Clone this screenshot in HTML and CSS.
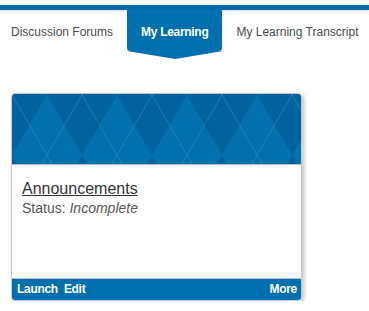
FILE: index.html
```html
<!DOCTYPE html>
<html lang="en">
<head>
    <meta charset="UTF-8">
    <meta name="viewport" content="width=device-width, initial-scale=1.0">
    <title>My Learning</title>
    <link rel="stylesheet" href="styles.css">
</head>
<body>
    <div class="topbar"></div>

    <nav class="tabs">
        <a href="#" class="tab">Discussion Forums</a>
        <a href="#" class="tab tab-active">My Learning</a>
        <a href="#" class="tab">My Learning Transcript</a>
    </nav>

    <div class="course-card">
        <div class="card-banner">
            <svg width="100%" height="70" xmlns="http://www.w3.org/2000/svg">
                <defs>
                    <pattern id="argyle" width="70" height="120" patternUnits="userSpaceOnUse" y="1">
                        <rect width="70" height="120" fill="#00639e"/>
                        <polygon points="35,0 70,60 35,120 0,60" fill="#0071ad"/>
                        <line x1="0" y1="0" x2="70" y2="120" stroke="#3f90c3" stroke-width="0.7" stroke-opacity="0.7"/>
                        <line x1="70" y1="0" x2="0" y2="120" stroke="#3f90c3" stroke-width="0.7" stroke-opacity="0.7"/>
                    </pattern>
                </defs>
                <rect width="100%" height="70" fill="url(#argyle)"/>
            </svg>
        </div>
        <div class="card-body">
            <a href="#" class="card-title">Announcements</a>
            <div class="card-status">Status: <em>Incomplete</em></div>
        </div>
        <div class="card-footer">
            <div class="card-actions">
                <a href="#">Launch</a>
                <a href="#">Edit</a>
            </div>
            <a href="#">More</a>
        </div>
    </div>
</body>
</html>
```

FILE: styles.css
```css
:root {
    --blue: #006fad;
    --bar: #0069a8;
    --text: #4b4b4b;
}

body {
    font-family: "Liberation Sans", Arial, sans-serif;
    margin: 0;
    background: white;
}

.topbar {
    height: 5px;
    margin-top: 5px;
    background-color: var(--bar);
    box-shadow: 0 2px 3px rgba(0, 0, 0, 0.1);
}

.tabs {
    display: flex;
    height: 41px;
}

.tab {
    position: relative;
    display: block;
    padding: 3px 14px 0;
    line-height: 38px;
    font-size: 12px;
    color: var(--text);
    text-decoration: none;
    white-space: nowrap;
}

.tab:first-child {
    padding-left: 11px;
}

.tab-active {
    background-color: var(--blue);
    color: white;
    font-weight: bold;
    letter-spacing: -0.3px;
    border-radius: 0 0 3px 3px;
}

.tab-active::after {
    content: "";
    position: absolute;
    top: 100%;
    left: 0;
    border-left: 48px solid transparent;
    border-right: 48px solid transparent;
    border-top: 8px solid var(--blue);
}

.course-card {
    width: 291px;
    box-sizing: border-box;
    margin: 42px 0 0 11px;
    border: 1px solid #c9c9c9;
    border-radius: 4px;
    overflow: hidden;
    box-shadow: 2px 2px 4px rgba(0, 0, 0, 0.25);
}

.card-banner {
    height: 70px;
    border-bottom: 1px solid #bcbcbc;
}

.card-banner svg {
    display: block;
}

.card-body {
    height: 113px;
    box-sizing: border-box;
    padding: 15px 10px 0;
}

.card-title {
    display: block;
    font-size: 16px;
    line-height: 18px;
    color: #333;
    text-decoration: underline;
}

.card-status {
    font-size: 14px;
    line-height: 20px;
    color: #555;
}

.card-footer {
    display: flex;
    justify-content: space-between;
    height: 21px;
    padding: 0 4px 0 5px;
    border-top: 1px solid #bcbcbc;
    background-color: var(--blue);
    line-height: 21px;
}

.card-actions {
    display: flex;
    gap: 6px;
}

.card-footer a {
    color: white;
    font-size: 12px;
    font-weight: bold;
    letter-spacing: -0.3px;
    text-decoration: none;
}
```
